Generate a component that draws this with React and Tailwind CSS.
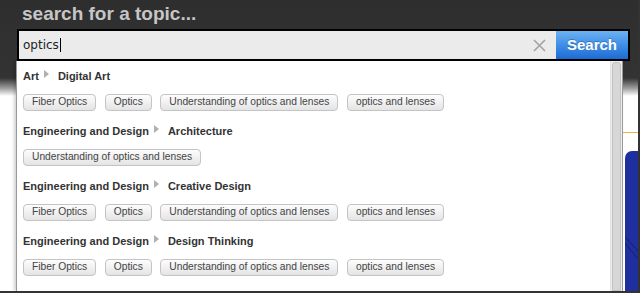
import React from "react";

const groups = [
  { cat: "Art", sub: "Digital Art", tags: ["Fiber Optics", "Optics", "Understanding of optics and lenses", "optics and lenses"] },
  { cat: "Engineering and Design", sub: "Architecture", tags: ["Understanding of optics and lenses"] },
  { cat: "Engineering and Design", sub: "Creative Design", tags: ["Fiber Optics", "Optics", "Understanding of optics and lenses", "optics and lenses"] },
  { cat: "Engineering and Design", sub: "Design Thinking", tags: ["Fiber Optics", "Optics", "Understanding of optics and lenses", "optics and lenses"] },
];

function Arrow() {
  return (
    <svg width="5" height="8" viewBox="0 0 5 8" className="ml-[5px] mr-[9px] -translate-y-[2px]">
      <path d="M0 0 L5 4 L0 8 Z" fill="#b0b0b0" />
    </svg>
  );
}

export default function App() {
  return (
    <div className="w-[644px] h-[296px] bg-white overflow-hidden font-['Liberation_Sans',Arial,sans-serif]">
      <div className="w-[640px] h-[293px] border-r-2 border-b-2 border-[#333] flex flex-col overflow-hidden bg-[linear-gradient(to_bottom,#2e2e2e_0px,#333_78px,#9a9a9a_88px,#fff_96px)]">
        {/* title */}
        <div className="h-[29px] shrink-0 pt-[4px] pl-[22px] text-[19px] font-bold leading-none text-[#c6c6c6]">
          search for a topic...
        </div>

        {/* search box */}
        <div className="ml-[17px] w-[613px] h-[32px] shrink-0 border-2 border-black flex">
          <div className="flex-1 bg-[#ebebeb] flex items-center pl-[4px]">
            <span className="font-['DejaVu_Sans',sans-serif] text-[12px] text-[#222] leading-none">optics</span>
            <span className="w-px h-[14px] bg-black ml-[1px]" />
            <div className="flex-1" />
            <svg width="13" height="13" viewBox="0 0 13 13" className="mr-[10px]">
              <path d="M1 1 L12 12 M12 1 L1 12" stroke="#a3a3a3" strokeWidth="1.6" />
            </svg>
          </div>
          <div className="w-[72px] bg-[linear-gradient(to_bottom,#6db1f2,#3f8ee6_50%,#1d6bd3)] flex items-center justify-center text-white text-[15px] font-bold [text-shadow:0_-1px_0_rgba(0,0,0,0.25)]">
            Search
          </div>
        </div>

        <div className="flex flex-1 min-h-0">
          <div className="w-[16px] shrink-0" />

          {/* dropdown */}
          <div className="w-[607px] shrink-0 bg-white border-l border-r border-[#999] flex shadow-[-2px_0_3px_rgba(0,0,0,0.18)]">
            <div className="flex-1 pl-[6px] pt-[2px] overflow-hidden">
              {groups.map((g, i) => (
                <div key={i}>
                  <div className="h-[26px] flex items-center text-[11px] font-bold text-[#333] leading-none">
                    <span>{g.cat}</span>
                    <Arrow />
                    <span>{g.sub}</span>
                  </div>
                  <div className="h-[29px] pt-[5px] flex items-start gap-[8.5px]">
                    {g.tags.map((t, j) => (
                      <span
                        key={j}
                        className="h-[17px] px-[8px] flex items-center border border-[#c4c4c4] rounded-[4px] bg-[linear-gradient(to_bottom,#fdfdfd,#e4e4e4)] text-[10.25px] leading-none text-[#444] whitespace-nowrap"
                      >
                        {t}
                      </span>
                    ))}
                  </div>
                </div>
              ))}
              <div className="h-[20px] flex items-end pl-[128px]">
                <svg width="5" height="4" viewBox="0 0 5 4">
                  <path d="M0 0 L4 4 L0 4 Z" fill="#c0c0c0" />
                </svg>
              </div>
            </div>
            {/* scrollbar */}
            <div className="w-[12px] shrink-0 bg-[#ededed] border-l border-[#e2e2e2] flex pt-[1px] px-[1px]">
              <div className="flex-1 rounded-t-[3px] bg-[#d7d7d7] border border-[#c2c2c2]" />
            </div>
          </div>

          {/* page peeking out at the right */}
          <div className="w-[15px] shrink-0 flex flex-col">
            <div className="h-[71px] shrink-0" />
            <div className="h-px shrink-0 bg-[#f2b04a]" />
            <div className="h-[18px] shrink-0 bg-white" />
            <div className="flex-1 ml-[2px] rounded-tl-[7px] bg-[#1f2f9d] overflow-hidden">
              <svg width="13" height="140" viewBox="0 0 13 140">
                <path d="M0 86 L13 100 M0 92 L13 108" stroke="#14206e" strokeWidth="1" />
              </svg>
            </div>
          </div>
        </div>
      </div>
    </div>
  );
}
